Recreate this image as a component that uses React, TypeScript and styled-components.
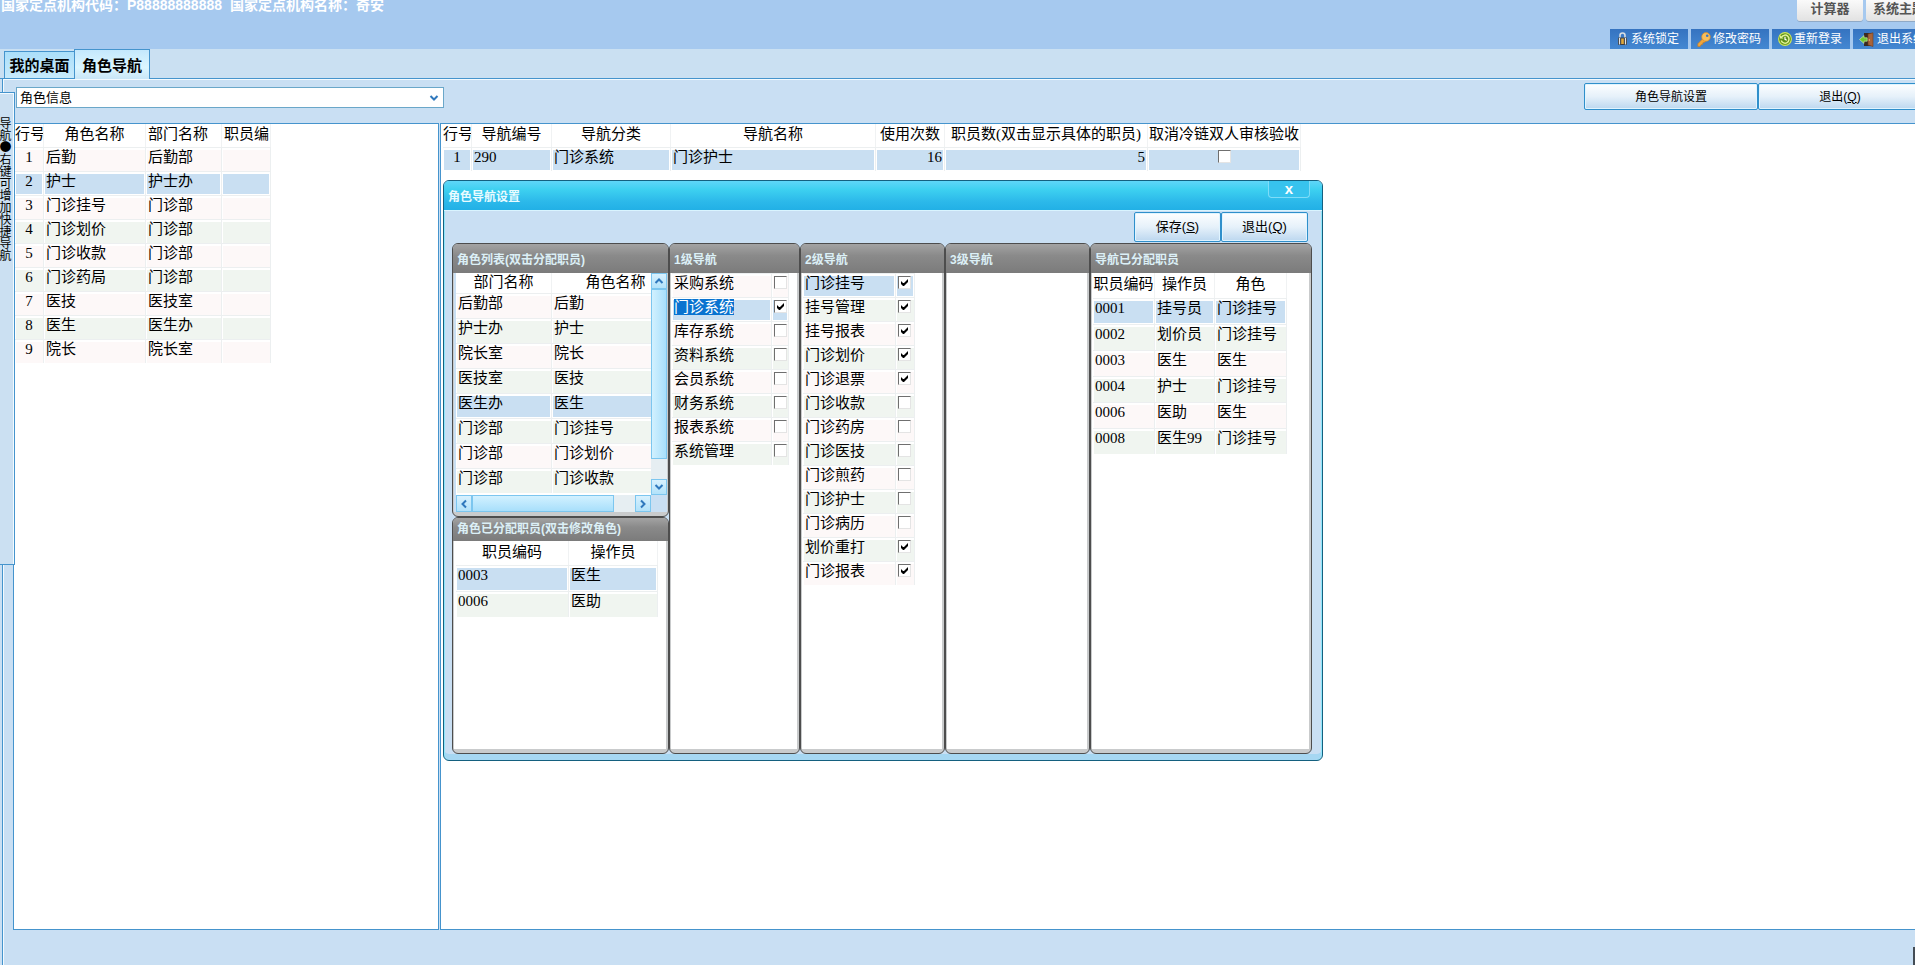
import React from "react";
import styled, { createGlobalStyle } from "styled-components";

const GRID_FONT = `"Liberation Serif", "Noto Sans CJK SC", serif`;
const UI_FONT = `"Liberation Sans", "Noto Sans CJK SC", sans-serif`;
const LINE = "#4594cd";
const SURFACE = "#c9dff3";

const GlobalStyle = createGlobalStyle`
  * { box-sizing: border-box; }
  html, body { margin: 0; padding: 0; }
  body { background: ${SURFACE}; color: #000; font-family: ${UI_FONT}; font-size: 12px; overflow: hidden; }
  button, select, input { font: inherit; color: inherit; margin: 0; padding: 0; }
`;

const Page = styled.div`
  position: relative;
  min-height: 100vh;
  display: flex;
  flex-direction: column;
  overflow: hidden;
`;

/* ---------- top banner ---------- */

const Banner = styled.header`
  display: flex;
  justify-content: space-between;
  height: 49px;
  background: #a6c9ef;
  overflow: hidden;
`;

const OrgInfo = styled.div`
  display: flex;
  gap: 8px;
  height: 12px;
  padding-left: 1px;
  margin-top: -1px;
  color: #fff;
  font-size: 14px;
  font-weight: 700;
  line-height: 12px;
  white-space: nowrap;
`;

const BannerTools = styled.div`
  flex: 0 0 336px;
  margin-right: -31px;
  display: flex;
  flex-direction: column;
  justify-content: space-between;
`;

const ToolRow = styled.div<{ $end?: boolean }>`
  display: flex;
  gap: 3px;
  padding-right: ${(p) => (p.$end ? 14 : 0)}px;
  justify-content: ${(p) => (p.$end ? "flex-end" : "flex-start")};
`;

const GreyButton = styled.button`
  width: 66px;
  height: 21px;
  padding-bottom: 4px;
  border: 0;
  border-radius: 0 0 3px 3px;
  background: linear-gradient(#fafafa, #e2e2e2);
  box-shadow: 0 1px 0 #8fa9c6;
  color: #555;
  font-size: 13px;
  font-weight: 700;
  line-height: 16px;
  white-space: nowrap;
`;

const BlueButton = styled.button`
  display: flex;
  align-items: center;
  gap: 2px;
  width: 78px;
  height: 20px;
  padding-left: 6px;
  border: 0;
  background: linear-gradient(#3573c0, #4488d2);
  color: #fff;
  font-size: 12px;
  line-height: 16px;
  white-space: nowrap;
  svg { flex: none; }
`;

/* ---------- tabs ---------- */

const TabStrip = styled.nav`
  display: flex;
  align-items: flex-end;
  height: 30px;
  padding-left: 4px;
  border-bottom: 1px solid ${LINE};
  background: #cae0f2;
`;

const Tab = styled.button<{ $active?: boolean }>`
  width: ${(p) => (p.$active ? 76 : 71)}px;
  height: ${(p) => (p.$active ? 30 : 27)}px;
  margin-bottom: ${(p) => (p.$active ? -1 : 0)}px;
  padding-top: 2px;
  border: 1px solid ${LINE};
  border-bottom: 0;
  margin-right: -1px;
  background: ${(p) =>
    p.$active ? "linear-gradient(#c4e8fd, #dcf6ff 60%, #c9e6f7)" : "linear-gradient(#abdffa, #c8eafb)"};
  font-size: 15px;
  font-weight: 700;
  line-height: 20px;
  white-space: nowrap;
`;

/* ---------- body ---------- */

const Body = styled.div`
  flex: 1;
  display: flex;
  margin-left: 2px;
  border-left: 1px solid ${LINE};
  box-shadow: inset 1px 1px 0 #f2faff;
`;

const Gutter = styled.aside`
  flex: 0 0 10px;
  min-width: 0;
  padding-top: 13px;
`;

const DockTab = styled.button`
  position: relative;
  display: block;
  width: 15px;
  height: 473px;
  margin-left: -3px;
  padding: 24px 0 0 0;
  border: 1px solid ${LINE};
  border-left: 0;
  box-shadow: inset -1px 1px 0 #f2faff;
  background: #cbe0f2;
  writing-mode: vertical-rl;
  text-align: left;
  font-family: "Noto Sans CJK SC", sans-serif;
  font-size: 12px;
  line-height: 18px;
  white-space: nowrap;
`;

const Workspace = styled.main`
  flex: 1;
  min-width: 0;
  display: flex;
  flex-direction: column;
`;

const Toolbar = styled.div`
  display: flex;
  justify-content: space-between;
  height: 44px;
  padding: 4px 0 0 3px;
  overflow: hidden;
`;

const SelectWrap = styled.label`
  display: grid;
  width: 428px;
  height: 21px;
  margin-top: 4px;
  align-items: center;
  svg { grid-area: 1 / 1; justify-self: end; margin-right: 5px; pointer-events: none; }
`;

const RoleSelect = styled.select`
  grid-area: 1 / 1;
  width: 100%;
  height: 21px;
  padding-left: 3px;
  appearance: none;
  border: 1px solid #6aa7c9;
  border-radius: 0;
  background: #fff;
  font-size: 13px;
  line-height: 18px;
`;

const ButtonGroup = styled.div`
  display: flex;
  margin-right: -7px;
`;

const GlossButton = styled.button<{ $w: number; $h?: number }>`
  width: ${(p) => p.$w}px;
  height: ${(p) => p.$h ?? 27}px;
  border: 1px solid #2f8fcb;
  border-radius: 2px;
  background: linear-gradient(#fdfeff, #e6f1fa 50%, #bcd7ef);
  box-shadow: inset 0 0 0 1px #e0f4ff;
  font-size: ${(p) => (p.$h ? 13 : 12)}px;
  line-height: 18px;
  white-space: nowrap;
`;

const Panes = styled.div`
  flex: 1;
  display: flex;
  gap: 1px;
`;

const Pane = styled.section<{ $w?: number }>`
  flex: ${(p) => (p.$w ? `0 0 ${p.$w}px` : "1")};
  min-width: 0;
  padding-left: ${(p) => (p.$w ? 1 : 2)}px;
  border: 1px solid ${LINE};
  border-right-width: ${(p) => (p.$w ? 1 : 0)}px;
  background: #fff;
`;

const StatusBar = styled.footer`
  display: flex;
  align-items: flex-end;
  justify-content: flex-end;
  height: 35px;
`;

const Grip = styled.span`
  width: 2px;
  height: 18px;
  background: #444c55;
`;

/* ---------- grids ---------- */

const GridTable = styled.table<{ $w: number }>`
  width: ${(p) => p.$w}px;
  table-layout: fixed;
  border-collapse: separate;
  border-spacing: 0;
  font-family: ${GRID_FONT};
  font-size: 15px;
`;

const Th = styled.th<{ $h: number; $left?: boolean }>`
  height: ${(p) => p.$h}px;
  padding: ${(p) => (p.$left ? "0 0 0 2px" : "0")};
  border-right: 1px solid #f0f2f3;
  background: #fff;
  font-weight: 400;
  line-height: ${(p) => (p.$h < 22 ? 18 : p.$h < 24 ? 20 : 22)}px;
  text-align: ${(p) => (p.$left ? "left" : "center")};
  vertical-align: top;
  white-space: nowrap;
  overflow: hidden;
`;

const tones = { pink: "#fdf8f8", green: "#f0f5f0", selected: "#c9dff2" };
type Tone = keyof typeof tones;

const Td = styled.td<{ $h: number; $tone: Tone; $align?: string }>`
  height: ${(p) => p.$h}px;
  padding: 0 2px;
  border-top: 1px solid #eceff0;
  border-right: 1px solid #eceff0;
  background: ${(p) => tones[p.$tone]};
  box-shadow: inset 1px 2px 0 #fff, inset -1px -1px 0 ${(p) => (p.$tone === "selected" ? "#fff" : "transparent")};
  line-height: 18px;
  text-align: ${(p) => p.$align ?? "left"};
  vertical-align: top;
  white-space: nowrap;
  overflow: hidden;
`;

const Marked = styled.mark`
  background: #0a73d0;
  color: #fff;
`;

const Check = styled.input`
  appearance: none;
  display: inline-block;
  width: 13px;
  height: 13px;
  margin-top: 2px;
  vertical-align: top;
  border: 1px solid #e4e4e4;
  border-top-color: #6f6f6f;
  border-left-color: #6f6f6f;
  background: #fff;
  &:checked::before {
    content: "";
    display: block;
    width: 7px;
    height: 7px;
    margin: 2px;
    background: #000;
    clip-path: polygon(0 2px, 2px 4px, 3px 4px, 7px 0, 7px 3px, 3px 7px, 2px 7px, 0 5px);
  }
`;

type Column = { title?: string; width: number; align?: string; left?: boolean };
type GridProps = {
  columns: Column[];
  rows: React.ReactNode[][];
  selected: number;
  rowHeight: number;
  headHeight?: number;
};

function Grid({ columns, rows, selected, rowHeight, headHeight }: GridProps) {
  return (
    <GridTable $w={columns.reduce((sum, c) => sum + c.width, 0)}>
      <colgroup>
        {columns.map((c, i) => (
          <col key={i} width={c.width} />
        ))}
      </colgroup>
      {headHeight && (
        <thead>
          <tr>
            {columns.map((c, i) => (
              <Th key={i} scope="col" $h={headHeight} $left={c.left}>
                {c.title}
              </Th>
            ))}
          </tr>
        </thead>
      )}
      <tbody>
        {rows.map((row, r) => (
          <tr key={r}>
            {row.map((cell, i) => (
              <Td
                key={i}
                $h={rowHeight}
                $align={columns[i].align}
                $tone={r === selected ? "selected" : r % 2 ? "green" : "pink"}
              >
                {cell}
              </Td>
            ))}
          </tr>
        ))}
      </tbody>
    </GridTable>
  );
}

/* ---------- dialog ---------- */

const Dialog = styled.section`
  position: absolute;
  left: 443px;
  top: 180px;
  width: 880px;
  height: 581px;
  display: flex;
  flex-direction: column;
  border: 1px solid #14607f;
  border-radius: 6px;
  background: ${SURFACE};
  box-shadow: inset 1px 0 0 #8fe6fb, inset -1px 0 0 #8fe6fb, inset 0 -6px 0 #a6d7f2;
  overflow: hidden;
`;

const TitleBar = styled.header`
  display: flex;
  justify-content: space-between;
  height: 30px;
  padding: 0 12px 0 4px;
  border-bottom: 1px solid #d9f4ff;
  background: linear-gradient(#5fd6f8, #3dd0f0 30%, #2cb9ea 70%, #22b0e6);
`;

const DialogTitle = styled.h1`
  margin: 6px 0 0;
  color: #e9fbff;
  font-size: 12px;
  font-weight: 700;
  line-height: 20px;
`;

const CloseButton = styled.button`
  width: 42px;
  height: 17px;
  border: 1px solid #7fdcf8;
  border-top: 0;
  border-radius: 0 0 4px 4px;
  background: #37c3ee;
  color: #fff;
  font-size: 15px;
  font-weight: 700;
  line-height: 14px;
`;

const DialogTools = styled.div`
  display: flex;
  justify-content: flex-end;
  height: 32px;
  padding: 1px 14px 0 0;
`;

const Columns = styled.div`
  flex: 1;
  display: flex;
  padding: 0 10px 6px 8px;
`;

const Stack = styled.div`
  display: flex;
  flex-direction: column;
  flex: 0 0 217px;
`;

const Panel = styled.section<{ $w?: number; $h?: number }>`
  flex: ${(p) => (p.$w ? `0 0 ${p.$w}px` : p.$h ? `0 0 ${p.$h}px` : "1")};
  min-width: 0;
  display: flex;
  flex-direction: column;
  border: 1px solid #4d4d4d;
  border-radius: 6px;
  background: #c9cbcc;
  overflow: hidden;
`;

const PanelTitle = styled.h2<{ $short?: boolean }>`
  height: ${(p) => (p.$short ? 23 : 29)}px;
  margin: 0;
  padding: ${(p) => (p.$short ? "0" : "5px")} 0 0 4px;
  background: linear-gradient(#a3a3a3, #8a8a8a 40%, #7b7b7b);
  color: #dcf0f7;
  font-size: 12px;
  font-weight: 700;
  line-height: 22px;
  white-space: nowrap;
`;

const PanelBody = styled.div<{ $inset?: boolean }>`
  flex: 1;
  min-height: 0;
  margin: 0 2px 4px 1px;
  padding: 0 0 0 ${(p) => (p.$inset ? 2 : 1)}px;
  background: #fff;
  overflow: hidden;
`;

const ScrollBody = styled(PanelBody)`
  display: grid;
  grid-template-columns: 1fr 16px;
  grid-template-rows: 1fr 17px;
  margin-right: 1px;
  background: ${SURFACE};
`;

const Viewport = styled.div`
  background: #fff;
  overflow: hidden;
`;

const Scrollbar = styled.div<{ $horizontal?: boolean }>`
  display: flex;
  flex-direction: ${(p) => (p.$horizontal ? "row" : "column")};
  background: #e6eef2;
`;

const ScrollArrow = styled.button`
  flex: 0 0 16px;
  min-width: 16px;
  display: grid;
  place-items: center;
  border: 1px solid #7cc6ef;
  background: linear-gradient(#d8f1fe, #b2e2fa);
`;

const Thumb = styled.div<{ $size: number; $horizontal?: boolean }>`
  flex: 0 0 ${(p) => p.$size}px;
  border: 1px solid #7cc6ef;
  background: linear-gradient(${(p) => (p.$horizontal ? "180deg" : "90deg")}, #d2f1ff, #a8dffb);
`;

const Filler = styled.span`
  flex: 1;
`;

function Chevron({ turn }: { turn: number }) {
  return (
    <svg width="10" height="10" viewBox="0 0 10 10" aria-hidden="true">
      <path
        d="M1.5 3 L5 6.5 L8.5 3"
        fill="none"
        stroke="#2f78bd"
        strokeWidth="2"
        transform={`rotate(${turn} 5 5)`}
      />
    </svg>
  );
}

function LockIcon() {
  return (
    <svg width="13" height="14" viewBox="0 0 13 14" aria-hidden="true">
      <path d="M4 6V3.5a2.5 2.5 0 0 1 5 0V6" fill="none" stroke="#d8dde2" strokeWidth="1.6" />
      <rect x="2" y="5.5" width="9" height="7.5" rx="1" fill="#3b3f45" />
      <path d="M3.5 6v6.5M9.5 6v6.5" stroke="#e3e6ea" strokeWidth="1.2" />
      <rect x="5.2" y="6.5" width="2.6" height="5.5" fill="#e0a93a" />
    </svg>
  );
}

function KeyIcon() {
  return (
    <svg width="14" height="15" viewBox="0 0 14 15" aria-hidden="true">
      <path d="M6.8 5.6 .8 11.8V14.4h2.4l.8-1.6 1.6-.2.3-1.8 1.6-.3 1.6-2z" fill="#f0a63c" stroke="#c9781c" strokeWidth=".6" />
      <circle cx="9" cy="4.9" r="4.3" fill="#f9bf5b" stroke="#d58a27" strokeWidth=".7" />
      <circle cx="10.2" cy="3.7" r="1.3" fill="#3a78c6" />
    </svg>
  );
}

function ReloginIcon() {
  return (
    <svg width="14" height="14" viewBox="0 0 14 14" aria-hidden="true">
      <circle cx="7" cy="7" r="6.4" fill="#5f8f1c" stroke="#cfe85a" strokeWidth="1.1" />
      <path d="M3.6 5A4 4 0 1 1 3.2 8.4" fill="none" stroke="#e4f596" strokeWidth="1.5" />
      <path d="M2 3.2v3.4h3.4z" fill="#e4f596" />
      <path d="M7 4.8V7.4l1.8 .8" fill="none" stroke="#fff" strokeWidth="1.2" />
    </svg>
  );
}

function ExitIcon() {
  return (
    <svg width="16" height="15" viewBox="0 0 16 15" aria-hidden="true">
      <rect x="5" y="1" width="9" height="13" fill="#3a2a22" />
      <path d="M9 2 14 .8V14.5L9 13z" fill="#a8643a" stroke="#6f3c1f" strokeWidth=".6" />
      <circle cx="10.3" cy="8" r=".7" fill="#f3d27c" />
      <path d="M.5 7.5 5 3.6v2.2h3.2v3.4H5v2.2z" fill="#6cc62e" stroke="#d6f3b5" strokeWidth=".6" />
    </svg>
  );
}

/* ---------- data ---------- */

const roles = [
  ["后勤", "后勤部"],
  ["护士", "护士办"],
  ["门诊挂号", "门诊部"],
  ["门诊划价", "门诊部"],
  ["门诊收款", "门诊部"],
  ["门诊药局", "门诊部"],
  ["医技", "医技室"],
  ["医生", "医生办"],
  ["院长", "院长室"],
].map(([role, dept], i) => [i + 1, role, dept, ""]);

const roleList = [
  ["后勤部", "后勤"],
  ["护士办", "护士"],
  ["院长室", "院长"],
  ["医技室", "医技"],
  ["医生办", "医生"],
  ["门诊部", "门诊挂号"],
  ["门诊部", "门诊划价"],
  ["门诊部", "门诊收款"],
];

const checkRow = (name: string, on: boolean, marked = false) => [
  marked ? <Marked>{name}</Marked> : name,
  <Check type="checkbox" aria-label={name} defaultChecked={on} />,
];

const level1 = ["采购系统", "门诊系统", "库存系统", "资料系统", "会员系统", "财务系统", "报表系统", "系统管理"].map(
  (name, i) => checkRow(name, i === 1, i === 1)
);

const level2 = [
  "门诊挂号", "挂号管理", "挂号报表", "门诊划价", "门诊退票", "门诊收款", "门诊药房",
  "门诊医技", "门诊煎药", "门诊护士", "门诊病历", "划价重打", "门诊报表",
].map((name, i) => checkRow(name, i < 5 || i > 10));

const navStaff = [
  ["0001", "挂号员", "门诊挂号"],
  ["0002", "划价员", "门诊挂号"],
  ["0003", "医生", "医生"],
  ["0004", "护士", "门诊挂号"],
  ["0006", "医助", "医生"],
  ["0008", "医生99", "门诊挂号"],
];

export default function App() {
  return (
    <Page>
      <GlobalStyle />
      <Banner>
        <OrgInfo>
          <span>国家定点机构代码：P88888888888</span>
          <span>国家定点机构名称：奇安</span>
        </OrgInfo>
        <BannerTools>
          <ToolRow $end>
            <GreyButton>计算器</GreyButton>
            <GreyButton>系统主题</GreyButton>
          </ToolRow>
          <ToolRow>
            <BlueButton><LockIcon />系统锁定</BlueButton>
            <BlueButton><KeyIcon />修改密码</BlueButton>
            <BlueButton><ReloginIcon />重新登录</BlueButton>
            <BlueButton><ExitIcon />退出系统</BlueButton>
          </ToolRow>
        </BannerTools>
      </Banner>

      <TabStrip>
        <Tab>我的桌面</Tab>
        <Tab $active>角色导航</Tab>
      </TabStrip>

      <Body>
        <Gutter>
          <DockTab>导航●右键可增加快捷导航</DockTab>
        </Gutter>
        <Workspace>
          <Toolbar>
            <SelectWrap>
              <RoleSelect aria-label="角色信息">
                <option>角色信息</option>
              </RoleSelect>
              <Chevron turn={0} />
            </SelectWrap>
            <ButtonGroup>
              <GlossButton $w={174}>角色导航设置</GlossButton>
              <GlossButton $w={164}>
                退出(<u>Q</u>)
              </GlossButton>
            </ButtonGroup>
          </Toolbar>
          <Panes>
            <Pane $w={426}>
              <Grid
                headHeight={23}
                rowHeight={24}
                selected={1}
                columns={[
                  { title: "行号", width: 29, align: "center" },
                  { title: "角色名称", width: 102 },
                  { title: "部门名称", width: 76, left: true },
                  { title: "职员编", width: 49, left: true },
                ]}
                rows={roles}
              />
            </Pane>
            <Pane>
              <Grid
                headHeight={23}
                rowHeight={24}
                selected={0}
                columns={[
                  { title: "行号", width: 29, align: "center" },
                  { title: "导航编号", width: 80 },
                  { title: "导航分类", width: 119 },
                  { title: "导航名称", width: 205 },
                  { title: "使用次数", width: 69, align: "right" },
                  { title: "职员数(双击显示具体的职员)", width: 203, align: "right" },
                  { title: "取消冷链双人审核验收", width: 153, align: "center" },
                ]}
                rows={[
                  [1, "290", "门诊系统", "门诊护士", 16, 5, <Check type="checkbox" aria-label="取消冷链双人审核验收" />],
                ]}
              />
            </Pane>
          </Panes>
          <StatusBar>
            <Grip />
          </StatusBar>
        </Workspace>
      </Body>

      <Dialog role="dialog" aria-labelledby="dialog-title">
        <TitleBar>
          <DialogTitle id="dialog-title">角色导航设置</DialogTitle>
          <CloseButton aria-label="关闭">x</CloseButton>
        </TitleBar>
        <DialogTools>
          <GlossButton $w={87} $h={30}>
            保存(<u>S</u>)
          </GlossButton>
          <GlossButton $w={87} $h={30}>
            退出(<u>Q</u>)
          </GlossButton>
        </DialogTools>
        <Columns>
          <Stack>
            <Panel $h={274}>
              <PanelTitle>角色列表(双击分配职员)</PanelTitle>
              <ScrollBody $inset>
                <Viewport>
                  <Grid
                    headHeight={20}
                    rowHeight={25}
                    selected={4}
                    columns={[
                      { title: "部门名称", width: 96 },
                      { title: "角色名称", width: 128 },
                    ]}
                    rows={roleList}
                  />
                </Viewport>
                <Scrollbar>
                  <ScrollArrow aria-label="向上"><Chevron turn={180} /></ScrollArrow>
                  <Thumb $size={170} />
                  <Filler />
                  <ScrollArrow aria-label="向下"><Chevron turn={0} /></ScrollArrow>
                </Scrollbar>
                <Scrollbar $horizontal>
                  <ScrollArrow aria-label="向左"><Chevron turn={90} /></ScrollArrow>
                  <Thumb $size={142} $horizontal />
                  <Filler />
                  <ScrollArrow aria-label="向右"><Chevron turn={-90} /></ScrollArrow>
                </Scrollbar>
              </ScrollBody>
            </Panel>
            <Panel>
              <PanelTitle $short>角色已分配职员(双击修改角色)</PanelTitle>
              <PanelBody $inset>
                <Grid
                  headHeight={24}
                  rowHeight={26}
                  selected={0}
                  columns={[
                    { title: "职员编码", width: 113 },
                    { title: "操作员", width: 89 },
                  ]}
                  rows={[
                    ["0003", "医生"],
                    ["0006", "医助"],
                  ]}
                />
              </PanelBody>
            </Panel>
          </Stack>
          <Panel $w={131}>
            <PanelTitle>1级导航</PanelTitle>
            <PanelBody>
              <Grid rowHeight={24} selected={1} columns={[{ width: 100 }, { width: 17 }]} rows={level1} />
            </PanelBody>
          </Panel>
          <Panel $w={145}>
            <PanelTitle>2级导航</PanelTitle>
            <PanelBody>
              <Grid rowHeight={24} selected={0} columns={[{ width: 93 }, { width: 19 }]} rows={level2} />
            </PanelBody>
          </Panel>
          <Panel $w={145}>
            <PanelTitle>3级导航</PanelTitle>
            <PanelBody />
          </Panel>
          <Panel>
            <PanelTitle>导航已分配职员</PanelTitle>
            <PanelBody>
              <Grid
                headHeight={25}
                rowHeight={26}
                selected={0}
                columns={[
                  { title: "职员编码", width: 62 },
                  { title: "操作员", width: 60 },
                  { title: "角色", width: 72 },
                ]}
                rows={navStaff}
              />
            </PanelBody>
          </Panel>
        </Columns>
      </Dialog>
    </Page>
  );
}
